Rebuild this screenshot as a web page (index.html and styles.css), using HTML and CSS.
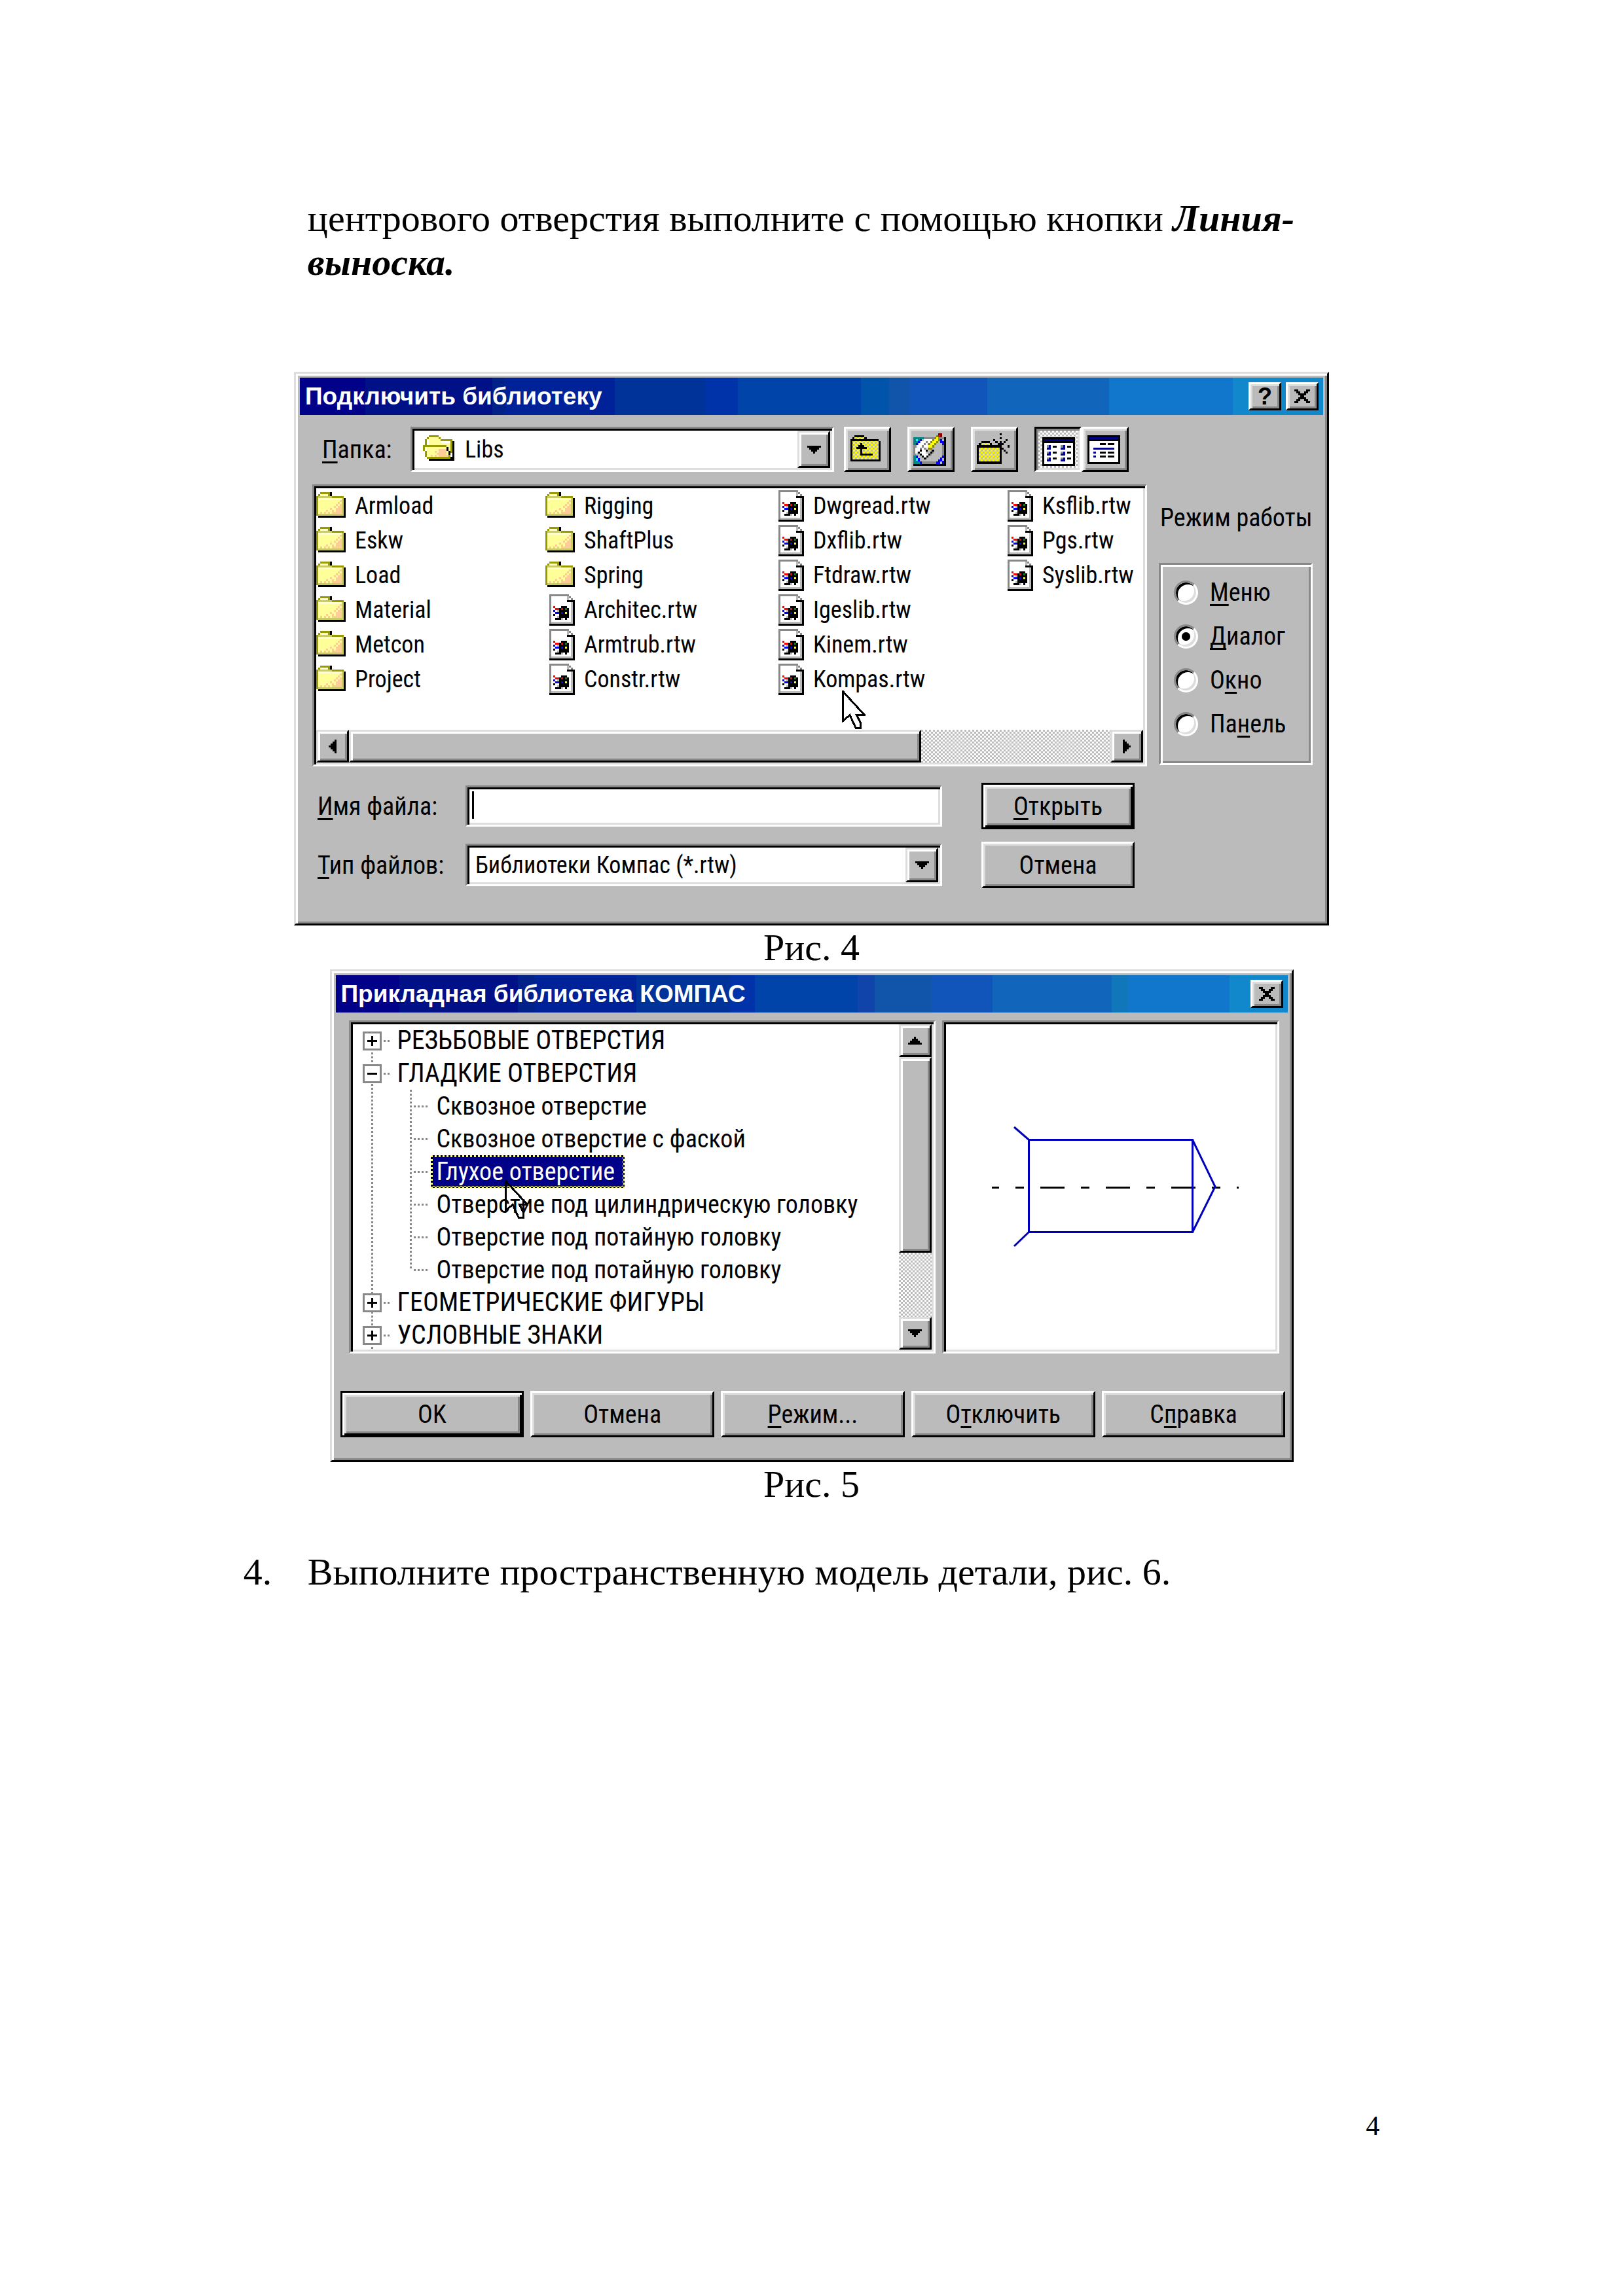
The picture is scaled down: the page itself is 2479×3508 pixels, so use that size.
FILE: index.html
```
<!DOCTYPE html>
<html lang="ru">
<head>
<meta charset="utf-8">
<meta name="viewport" content="width=device-width, initial-scale=1">
<title>Компас: библиотеки, страница 4</title>
<link rel="stylesheet" href="styles.css">
</head>
<body>
<svg class="defs" aria-hidden="true">
  <defs>
    <pattern id="checker" width="18" height="18" patternUnits="userSpaceOnUse">
      <path fill="#bbb" d="M0 0h18v18H0z"/><path fill="#ff0" d="M0 0h9v9H0zM9 9h9v9H9z"/>
    </pattern>
    <symbol id="folder" viewBox="0 0 16 16">
      <path fill="#ff9" d="M2 2h5v1h7v10H1V3h1z"/>
      <path fill="#ffc" d="M2 2h4v1H2zM1 4h13v1H1z"/>
      <path fill="#990" d="M2 1h5v1H2zM1 2h1v1H1zM0 3h1v10H0zM7 3h7v1H7zM6 2h1v1H6z"/>
      <path fill="#cc6" d="M1 4h7v-1H1zM13 4h1v9h-1zM1 12h13v1H1z"/>
      <path fill="#fc9" d="M12 5h1v1h-1zM11 6h1v1h-1zM12 7h1v1h-1zM10 7h1v1h-1zM9 8h1v1H9zM11 8h2v1h-2zM7 9h1v1H7zM10 9h3v1h-3zM5 10h1v1H5zM8 10h1v1H8zM10 10h3v1h-3zM2 11h1v1H2zM4 11h1v1H4zM6 11h1v1H6zM8 11h5v1H8z"/>
      <path d="M14 4h1v10H1v-1h13zM7 1h1v2H7z"/>
    </symbol>
    <symbol id="file" viewBox="0 0 16 16">
      <path fill="#fff" d="M2 0h10l3 3v13H2z"/>
      <path fill="#888" d="M2 0h10v1H2zM2 0h1v15H2zM12 1h1v1h-1zM13 2h1v1h-1z"/>
      <path fill="#bbb" d="M11 1h1v2h-1zM13 4h1v10h-1zM3 14h11v1H3z"/>
      <path d="M11 3h4v1h-4zM14 3h1v13h-1zM2 15h13v1H2zM8 6h3v1H8zM7 7h5v5h-1v1h-1v-1H8v1H5v-1h2zM4 10h1v1H4z"/>
      <path fill="#f00" d="M4 6h1v1H4zM5 7h2v1H5zM8 7h1v1H8z"/>
      <path fill="#00f" d="M4 8h1v1H4zM5 9h2v1H5zM8 9h1v1H8z"/>
      <path fill="#080" d="M10 7h1v1h-1z"/><path fill="#ff0" d="M10 9h1v1h-1z"/>
      <path fill="#bbb" d="M6 8h1v1H6zM6 11h1v1H6zM8 12h1v1H8z"/>
    </symbol>
    <symbol id="folder-open" viewBox="0 0 16 14">
      <path fill="#ff9" d="M3 1h5v1h6v10H2V2h1z"/>
      <path fill="#fff" d="M2 2h1v3H2zM9 3h5v1H9z"/>
      <path fill="#fc9" d="M8 7h4v1H8zM6 8h1v1H6zM8 8h4v1H8zM7 9h5v1H7zM4 10h1v1H4zM6 10h1v1H6zM8 10h5v1H8zM5 11h1v1H5z"/>
      <path fill="#990" d="M3 0h5v1H3zM2 1h1v1H2zM1 2h1v3H1zM8 1h1v1H8zM9 2h6v1H9zM14 3h1v6h-1zM0 5h12v1H0zM0 6h1v2H0zM1 8h1v3H1zM2 11h12v1H2zM12 6h1v2h-1zM13 8h1v3h-1z"/>
      <path d="M15 3h1v10H3v-1h11v-1h1zM12 6h1v2h-1zM13 8h1v2h-1z"/>
    </symbol>
    <symbol id="pointer" viewBox="0 0 12 20">
      <path stroke="#000" d="M.5 .5V15.5L4 12.5L7 19H9.500V16.500L7.500 12.500H11.500Z"/>
    </symbol>
    <symbol id="tri-down" viewBox="0 0 7 4"><path d="M0 0h7v1H6v1H5v1H4v1H3V3H2V2H1V1H0z"/></symbol>
    <symbol id="tri-up" viewBox="0 0 7 4"><path d="M0 4h7V3H6V2H5V1H4V0H3v1H2v1H1v1H0z"/></symbol>
    <symbol id="tri-left" viewBox="0 0 4 7"><path d="M4 0v7H3V6H2V5H1V4H0V3h1V2h1V1h1V0z"/></symbol>
    <symbol id="tri-right" viewBox="0 0 4 7"><path d="M0 0v7h1V6h1V5h1V4h1V3H3V2H2V1H1V0z"/></symbol>
    <symbol id="cross" viewBox="0 0 8 7"><path d="M0 0h2v1h1v1h2V1h1V0h2v1H7v1H6v1H5v1h1v1h1v1h1v1H6V6H5V5H3v1H2v1H0V6h1V5h1V4h1V3H2V2H1V1H0z"/></symbol>
  </defs>
</svg>

<main class="sheet">
  <p class="lead">центрового отверстия выполните с помощью кнопки <strong>Линия-<br>выноска.</strong></p>

  <figure class="figure">
    <section class="window window-open" aria-label="Подключить библиотеку">
      <header class="titlebar bands-open">
        <h2 class="title">Подключить библиотеку</h2>
        <button class="raised caption-button" type="button">?</button>
        <button class="raised caption-button" type="button" aria-label="Закрыть"><svg class="cross"><use href="#cross"/></svg></button>
      </header>
      <form class="open-body">
        <div class="toolbar">
          <label class="toolbar-label" for="dir"><u>П</u>апка:</label>
          <div class="combo">
            <select class="sunken combo-field with-icon" id="dir"><option>Libs</option></select>
            <svg class="combo-icon"><use href="#folder-open"/></svg>
            <span class="soft combo-drop"><svg class="tri-v"><use href="#tri-down"/></svg></span>
          </div>
          <div class="tools">
            <button class="raised tool" type="button" aria-label="На один уровень вверх">
              <svg viewBox="39 30 198 189"><path fill="url(#checker)" d="M69 87h120v84H69zM78 69h45v9H78z"/><path d="M78 60h45v9H78zM69 69h9v9h-9zM123 69h12v9h-12zM60 78h129v9H60zM60 78h9v102h-9zM189 87h9v93h-9zM60 171h138v9H60zM105 96h9v9h-9zM96 105h27v9H96zM87 114h48v9H87zM105 123h9v30h-9zM105 144h57v9h-57z"/></svg>
            </button>
            <button class="raised tool" type="button" aria-label="Рабочий стол">
              <svg viewBox="330 30 198 189">
                <path fill="#bbb" d="M348 69h141v123H348z"/>
                <path fill="#888" d="M396 69h93v9h-93zM348 105h12v48h-12zM387 180h75v12h-75zM480 105h9v48h-9zM396 87h12v9h-12zM387 96h9v9h-9z"/>
                <path fill="#088" d="M348 69h48v9h-9v9h-9v9h-9v9h-21zM348 153h12v12h9v12h9v15h-30z"/>
                <path fill="#0ff" d="M360 78h9v9h-9zM360 165h9v12h-9z"/>
                <path fill="#00f" d="M378 78h9v9h-9zM369 87h9v9h-9zM360 96h9v9h-9zM360 153h9v12h-9zM369 165h9v15h-9zM378 180h9v12h-9zM471 78h9v18h-9zM480 87h9v18h-9zM480 153h9v12h-9zM471 162h9v18h-9zM462 171h9v9h-9zM453 180h18v12h-18zM480 177h9v15h-9z"/>
                <path fill="#fff" d="M396 78h54v9h-9v9h-18v9h-9v21h-9v18h18v9h-9v9h-9v9h-9v-9h-9v-9h-9v-18h-12v9h-9v-27h9v-12h9v-9h9v-9h12z"/>
                <path fill="#888" d="M405 87h9v9h-9v9h-9v12h-9v12h-9v-12h9v-12h9v-9h9zM396 117h12v9h-12zM432 135h9v9h-9v9h-9v-9h9z"/>
                <path d="M489 69h9v132H348v-9h141zM369 135h9v9h-9zM378 144h9v9h-9zM387 153h9v9h-9zM396 162h12v9h-12zM408 153h9v9h-9zM417 144h9v9h-9zM426 135h9v9h-9zM432 126h12v9h-12zM378 126h9v9h-9zM405 126h9v9h-9z"/>
                <path fill="#880" d="M453 60h9v9h-9zM444 69h9v9h-9zM435 78h9v9h-9zM426 87h9v9h-9zM414 96h12v9h-12zM405 105h9v21h9v-9h-9v-12zM423 117h12v9h-12zM435 105h9v12h-9zM444 96h9v9h-9zM453 87h9v9h-9zM462 78h9v9h-9z"/>
                <path fill="#ff0" d="M453 69h9v18h-9v9h-9v9h-9v12h-21v-12h12v-9h9v-9h9v-9h9z"/>
                <path fill="#800" d="M462 51h18v18h-18z"/><path fill="#f00" d="M462 60h9v9h-9z"/>
              </svg>
            </button>
            <button class="raised tool" type="button" aria-label="Создать папку">
              <svg viewBox="621 30 198 189"><path fill="url(#checker)" d="M648 117h96v63h-96zM660 96h39v9h-39z"/><path d="M660 87h39v9h-39zM648 96h12v9h-12zM699 96h9v9h-9zM639 105h114v12H639zM639 105h9v87h-9zM744 117h9v75h-9zM639 180h114v12H639zM744 51h9v9h-9zM744 69h9v9h-9zM714 78h9v9h-9zM723 87h12v9h-12zM771 78h9v9h-9zM762 87h9v9h-9zM744 87h9v18h-9zM735 96h9v9h-9zM753 96h9v9h-9zM780 105h9v12h-9zM753 117h9v9h-9zM762 126h9v9h-9zM771 135h9v9h-9z"/></svg>
            </button>
            <div class="tool-pair">
              <button class="tool pressed" type="button" aria-pressed="true" aria-label="Список">
                <svg viewBox="912 30 198 189"><path d="M939 69h150v132H939z"/><path fill="#fff" d="M948 96h132v96H948z"/><path fill="#008" d="M948 78h132v9H948zM960 105h18v21h-18zM1023 105h21v21h-21zM960 135h18v18h-18zM1023 135h21v18h-21zM960 162h18v18h-18zM1023 162h21v18h-21z"/><path fill="#888" d="M960 105h9v12h-9zM1023 105h12v12h-12zM960 135h9v9h-9zM1023 135h12v9h-12zM960 162h9v9h-9zM1023 162h12v9h-12z"/><path d="M987 108h18v9h-18zM1053 108h18v9h-18zM987 135h18v9h-18zM1053 135h18v9h-18zM987 162h18v9h-18zM1053 162h18v9h-18z"/></svg>
              </button>
              <button class="raised tool" type="button" aria-label="Таблица">
                <svg viewBox="1128 30 198 189"><path d="M1146 60h150v132h-150z"/><path fill="#fff" d="M1155 87h132v96h-132z"/><path fill="#008" d="M1155 69h132v9h-132zM1173 117h96v9h-96zM1173 135h12v9h-12zM1173 153h12v9h-12z"/><path d="M1203 96h27v9h-27zM1239 96h30v9h-30zM1203 135h27v9h-27zM1239 135h30v9h-30zM1203 153h27v9h-27zM1239 153h30v9h-30z"/></svg>
              </button>
            </div>
          </div>
        </div>

        <div class="sunken browser">
          <ul class="files">
            <li><svg><use href="#folder"/></svg>Armload</li>
            <li><svg><use href="#folder"/></svg>Eskw</li>
            <li><svg><use href="#folder"/></svg>Load</li>
            <li><svg><use href="#folder"/></svg>Material</li>
            <li><svg><use href="#folder"/></svg>Metcon</li>
            <li><svg><use href="#folder"/></svg>Project</li>
            <li><svg><use href="#folder"/></svg>Rigging</li>
            <li><svg><use href="#folder"/></svg>ShaftPlus</li>
            <li><svg><use href="#folder"/></svg>Spring</li>
            <li><svg><use href="#file"/></svg>Architec.rtw</li>
            <li><svg><use href="#file"/></svg>Armtrub.rtw</li>
            <li><svg><use href="#file"/></svg>Constr.rtw</li>
            <li><svg><use href="#file"/></svg>Dwgread.rtw</li>
            <li><svg><use href="#file"/></svg>Dxflib.rtw</li>
            <li><svg><use href="#file"/></svg>Ftdraw.rtw</li>
            <li><svg><use href="#file"/></svg>Igeslib.rtw</li>
            <li><svg><use href="#file"/></svg>Kinem.rtw</li>
            <li><svg><use href="#file"/></svg>Kompas.rtw</li>
            <li><svg><use href="#file"/></svg>Ksflib.rtw</li>
            <li><svg><use href="#file"/></svg>Pgs.rtw</li>
            <li><svg><use href="#file"/></svg>Syslib.rtw</li>
          </ul>
          <div class="scroll scroll-x">
            <button class="soft scroll-button" type="button" aria-label="Влево"><svg class="tri-h"><use href="#tri-left"/></svg></button>
            <span class="soft thumb-x"></span><span class="track-x"></span>
            <button class="soft scroll-button" type="button" aria-label="Вправо"><svg class="tri-h"><use href="#tri-right"/></svg></button>
          </div>
          <svg class="pointer pointer-files"><use href="#pointer"/></svg>
        </div>

        <fieldset class="modes">
          <legend>Режим работы</legend>
          <div class="group">
            <label><input type="radio" name="mode"><span><u>М</u>еню</span></label>
            <label><input type="radio" name="mode" checked><span><u>Д</u>иалог</span></label>
            <label><input type="radio" name="mode"><span>О<u>к</u>но</span></label>
            <label><input type="radio" name="mode"><span>Па<u>н</u>ель</span></label>
          </div>
        </fieldset>

        <div class="fields">
          <label for="name"><u>И</u>мя файла:</label>
          <div class="name-box">
            <input class="sunken name-field" id="name" type="text">
            <span class="caret"></span>
          </div>
          <button class="default push" type="button"><span><u>О</u>ткрыть</span></button>
          <label for="kind"><u>Т</u>ип файлов:</label>
          <div class="combo combo-low">
            <select class="sunken combo-field" id="kind"><option>Библиотеки Компас (*.rtw)</option></select>
            <span class="soft combo-drop"><svg class="tri-v"><use href="#tri-down"/></svg></span>
          </div>
          <button class="raised push" type="button">Отмена</button>
        </div>
      </form>
    </section>
    <figcaption>Рис. 4</figcaption>
  </figure>

  <figure class="figure">
    <section class="window window-library" aria-label="Прикладная библиотека КОМПАС">
      <header class="titlebar bands-library">
        <h2 class="title">Прикладная библиотека КОМПАС</h2>
        <button class="raised caption-button" type="button" aria-label="Закрыть"><svg class="cross"><use href="#cross"/></svg></button>
      </header>
      <div class="panes">
        <div class="sunken tree-pane">
          <ul class="tree">
            <li><div class="root"><button class="knob" type="button" aria-label="Развернуть"><svg viewBox="0 0 5 5"><path d="M2 0h1v2h2v1H3v2H2V3H0V2h2z"/></svg></button><span>РЕЗЬБОВЫЕ ОТВЕРСТИЯ</span></div></li>
            <li><div class="root"><button class="knob" type="button" aria-label="Свернуть"><svg viewBox="0 0 5 5"><path d="M0 2h5v1H0z"/></svg></button><span>ГЛАДКИЕ ОТВЕРСТИЯ</span></div>
              <ul class="leaves">
                <li><span>Сквозное отверстие</span></li>
                <li><span>Сквозное отверстие с фаской</span></li>
                <li><span class="selected">Глухое отверстие</span></li>
                <li><span>Отверстие под цилиндрическую головку</span></li>
                <li><span>Отверстие под потайную головку</span></li>
                <li><span>Отверстие под потайную головку</span></li>
              </ul>
            </li>
            <li><div class="root"><button class="knob" type="button" aria-label="Развернуть"><svg viewBox="0 0 5 5"><path d="M2 0h1v2h2v1H3v2H2V3H0V2h2z"/></svg></button><span>ГЕОМЕТРИЧЕСКИЕ ФИГУРЫ</span></div></li>
            <li><div class="root"><button class="knob" type="button" aria-label="Развернуть"><svg viewBox="0 0 5 5"><path d="M2 0h1v2h2v1H3v2H2V3H0V2h2z"/></svg></button><span>УСЛОВНЫЕ ЗНАКИ</span></div></li>
          </ul>
          <div class="scroll scroll-y">
            <button class="soft scroll-button" type="button" aria-label="Вверх"><svg class="tri-v"><use href="#tri-up"/></svg></button>
            <span class="soft thumb-y"></span><span class="track-y"></span>
            <button class="soft scroll-button" type="button" aria-label="Вниз"><svg class="tri-v"><use href="#tri-down"/></svg></button>
          </div>
          <svg class="pointer pointer-tree"><use href="#pointer"/></svg>
        </div>
        <div class="sunken preview">
          <svg viewBox="0 0 503 497" role="img" aria-label="Глухое отверстие">
            <path d="M70 248h11v3H70zM106 248h13v3h-13zM144 248h37v3h-37zM206 248h13v3h-13zM244 248h37v3h-37zM306 248h13v3h-13zM344 248h37v3h-37zM406 248h13v3h-13zM444 248h3v3h-3z"/>
            <path fill="none" stroke="#00b" stroke-width="3" d="M104 157L126.500 176.500H376.500V317.500H126.500L104 339M126.500 176.500V317.500M376.500 176.500L411 248L376.500 317.500"/>
          </svg>
        </div>
      </div>
      <div class="actions">
        <button class="default push" type="button">OK</button>
        <button class="raised push" type="button">Отмена</button>
        <button class="raised push" type="button"><span><u>Р</u>ежим...</span></button>
        <button class="raised push" type="button"><span>О<u>т</u>ключить</span></button>
        <button class="raised push" type="button"><span>С<u>п</u>равка</span></button>
      </div>
    </section>
    <figcaption>Рис. 5</figcaption>
  </figure>

  <ol class="steps" start="4">
    <li>Выполните пространственную модель детали, рис. 6.</li>
  </ol>
</main>
<footer class="page-number">4</footer>
</body>
</html>
```
FILE: styles.css
```
* { box-sizing: border-box; }

body {
  display: flex;
  flex-direction: column;
  min-height: 100vh;
  margin: 0;
  padding: 300px 15% 236px;
  background: #fff;
  color: #000;
  font: 58px/67px "Liberation Serif", "Times New Roman", serif;
}

.defs { position: absolute; width: 0; height: 0; }
svg { display: block; flex: none; shape-rendering: crispEdges; }
button, input, select { margin: 0; padding: 0; border-radius: 0; color: #000; font: inherit; }
u { text-decoration-thickness: 3px; text-underline-offset: 5px; text-decoration-skip-ink: none; }

/* Document text */
.lead { margin: 0 0 134px 98px; }
.lead strong { font-style: italic; }
.figure { margin: 0; }
figcaption { text-align: center; }
.steps { margin: 67px 0 0; padding: 0; list-style: none; counter-reset: step 3; }
.steps li { display: flex; counter-increment: step; }
.steps li::before { content: counter(step) "."; flex: none; width: 98px; }
.page-number { margin-top: auto; text-align: right; font-size: 42px; line-height: 48px; }

/* Bevels */
.window, .soft {
  border: 3px solid;
  border-color: #ddd #000 #000 #ddd;
  background: #bbb;
  box-shadow: inset 3px 3px #fff, inset -3px -3px #888;
}
.raised {
  border: 3px solid;
  border-color: #fff #000 #000 #fff;
  background: #bbb;
  box-shadow: inset 3px 3px #ddd, inset -3px -3px #888;
}
.default {
  border: 3px solid #000;
  background: #bbb;
  box-shadow: inset 3px 3px #fff, inset -3px -3px #000, inset 6px 6px #ddd, inset -6px -6px #888;
}
.sunken {
  border: 3px solid;
  border-color: #888 #fff #fff #888;
  background: #fff;
  box-shadow: inset 3px 3px #000, inset -3px -3px #ddd;
}
.pressed {
  border: 3px solid;
  border-color: #000 #fff #fff #000;
  box-shadow: inset 3px 3px #888, inset -3px -3px #ddd;
}
.pressed, .track-x, .track-y {
  background: conic-gradient(#fff 25%, #bbb 0 50%, #fff 0 75%, #bbb 0) 0 0 / 6px 6px;
}

/* Windows */
.window {
  max-width: 100%;
  margin: 0 auto;
  padding: 6px;
  font: 38px/44px "Roboto Condensed", "Liberation Sans", sans-serif;
}
.window-open { width: 1581px; }
.window-library { width: 1472px; }
.titlebar { display: flex; align-items: center; gap: 7px; padding: 0 7px 0 8px; }
.title { flex: 1; margin: 0; color: #fff; font: bold 37px/57px "Liberation Sans", Arial, sans-serif; }
.bands-open {
  background: linear-gradient(90deg, #008 6.4%, #018 0 18.8%, #028 0 20%, #029 0 30.8%, #039 0 39.6%, #03a 0 42.8%, #04a 0 54.8%, #05a 0 57.6%, #15a 0 59.6%, #15b 0 67.2%, #16b 0 79.1%, #17c 0 91.2%, #18c 0);
}
.bands-library {
  background: linear-gradient(90deg, #008 6.7%, #018 0 19.1%, #028 0 20.9%, #029 0 31.6%, #039 0 41.5%, #03a 0 44%, #04a 0 54.8%, #14a 0 56.6%, #15a 0 62.6%, #15b 0 69%, #16b 0 81.5%, #17b 0 83.2%, #17c 0 93.9%, #18c 0);
}
.caption-button {
  display: flex;
  align-items: center;
  justify-content: center;
  width: 50px;
  height: 43px;
  font: bold 36px/36px "Liberation Sans", Arial, sans-serif;
}
.cross { width: 24px; height: 21px; }
.push { height: 71px; text-align: center; }

/* File dialog */
.open-body {
  display: grid;
  grid-template-columns: minmax(0, 1fr) 235px;
  column-gap: 18px;
  padding: 18px 16px 48px 19px;
}
.toolbar { display: flex; align-items: center; height: 69px; margin-bottom: 19px; padding: 0 28px 0 15px; }
.toolbar-label { width: 135px; }
.toolbar .combo { flex: 1; height: 69px; }
.tools { display: flex; gap: 25px; margin-left: 15px; }
.tool-pair { display: flex; }
.tool { width: 72px; height: 69px; }
.tool svg { width: 66px; height: 63px; }

.combo { position: relative; }
.combo-field { width: 100%; height: 100%; padding: 0 60px 0 12px; appearance: none; font-size: 36px; }
.with-icon { padding-left: 80px; }
.combo-icon { position: absolute; top: 13px; left: 19px; width: 48px; height: 42px; }
.combo-drop {
  position: absolute;
  top: 6px;
  right: 6px;
  bottom: 6px;
  display: flex;
  align-items: center;
  justify-content: center;
  width: 50px;
  pointer-events: none;
}
.tri-v { width: 21px; height: 12px; }
.tri-h { width: 12px; height: 21px; }

.browser { position: relative; grid-column: 1; padding: 3px; }
.files {
  display: grid;
  grid-template-rows: repeat(6, 53px);
  grid-template-columns: repeat(3, 350px) 1fr;
  grid-auto-flow: column;
  margin: 0;
  padding: 0 0 51px;
  list-style: none;
  font-size: 36px;
}
.files li { display: flex; align-items: center; gap: 11px; white-space: nowrap; }
.files svg { width: 48px; height: 48px; }

.scroll { display: flex; }
.scroll-button { display: flex; flex: none; align-items: center; justify-content: center; width: 50px; height: 50px; }
.thumb-x { flex: 872; }
.track-x { flex: 290; }
.scroll-y { flex-direction: column; }
.thumb-y { flex: 297; }
.track-y { flex: 100; }

.pointer { position: absolute; width: 36px; height: 60px; pointer-events: none; }
.pointer-files { top: 312px; left: 806px; fill: #fff; }
.pointer-tree { top: 241px; left: 235px; fill: none; }

.modes { grid-column: 2; min-width: 0; margin: 0; padding: 0; border: 0; }
.modes legend { margin-bottom: 47px; padding: 29px 0 0 2px; white-space: nowrap; }
.group {
  display: flex;
  flex-direction: column;
  gap: 23px;
  padding: 20px 20px 38px;
  border: 3px solid;
  border-color: #888 #fff #fff #888;
  box-shadow: inset 3px 3px #fff, inset -3px -3px #888;
}
.group label { display: flex; align-items: center; gap: 18px; }
.group input {
  flex: none;
  width: 37px;
  height: 37px;
  border: 3px solid;
  border-color: #888 #fff #fff #888;
  border-radius: 50%;
  background: #fff;
  box-shadow: inset 3px 3px #000, inset -3px -3px #ddd;
  appearance: none;
}
.group input:checked { background: radial-gradient(circle, #000 6px, #fff 7px); }

.fields {
  display: grid;
  grid-template-columns: 226px 1fr 234px;
  align-items: center;
  row-gap: 19px;
  margin-top: 25px;
  padding: 0 19px 0 8px;
}
.fields .push { margin-left: 0; }
.name-box, .combo-low { position: relative; margin-right: 60px; }
.combo-low { height: 65px; }
.name-field { display: block; width: 100%; height: 63px; padding: 0 12px; }
.caret { position: absolute; top: 9px; left: 10px; width: 3px; height: 42px; background: #000; }

/* Library window */
.panes { display: grid; grid-template-columns: 896fr 515fr; gap: 10px; padding: 12px 13px 57px 20px; }
.tree-pane { position: relative; display: flex; padding: 3px; }
.tree, .leaves { margin: 0; padding: 0; list-style: none; }
.tree {
  flex: 1;
  min-width: 0;
  max-height: 497px;
  overflow: hidden;
  background: repeating-linear-gradient(#888 0 3px, #fff 0 6px) 28px 25px / 3px 100% no-repeat;
  white-space: nowrap;
}
.root { display: flex; align-items: center; height: 50px; padding-left: 15px; font-size: 40px; }
.knob {
  display: grid;
  place-content: center;
  width: 29px;
  height: 29px;
  border: 3px solid #888;
  background: #fff;
}
.knob svg { width: 15px; height: 15px; }
.root::after {
  content: "";
  order: 1;
  width: 9px;
  height: 3px;
  margin: 0 12px 0 3px;
  background: repeating-linear-gradient(90deg, #888 0 3px, #fff 0 6px);
}
.root span { order: 2; }
.leaves { background: repeating-linear-gradient(#888 0 3px, #fff 0 6px) 87px 0 / 3px calc(100% - 24px) no-repeat; }
.leaves li { display: flex; align-items: center; height: 50px; padding-left: 93px; }
.leaves li::before {
  content: "";
  width: 23px;
  height: 3px;
  margin-right: 3px;
  background: repeating-linear-gradient(90deg, #888 0 3px, #fff 0 6px);
}
.leaves span { padding: 0 12px 0 6px; border: 3px solid transparent; }
.leaves .selected {
  background:
    linear-gradient(#008, #008) padding-box,
    conic-gradient(#000 25%, #ff6 0 50%, #000 0 75%, #ff6 0) 0 0 / 6px 6px border-box;
  color: #fff;
}
.preview { padding: 3px; }
.preview svg { width: 100%; }
.preview path[stroke] { shape-rendering: auto; }
.actions { display: grid; grid-template-columns: repeat(5, 1fr); gap: 10px; padding: 0 3px 29px 7px; }
```
